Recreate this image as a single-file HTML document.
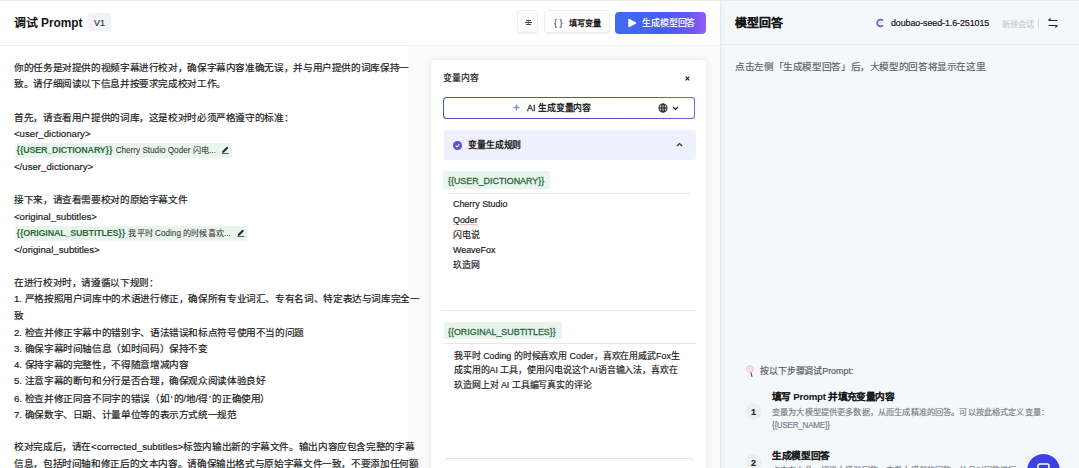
<!DOCTYPE html>
<html lang="zh-CN"><head><meta charset="utf-8">
<style>
*{box-sizing:border-box;margin:0;padding:0}
html,body{width:1079px;height:468px;overflow:hidden;background:#fff;font-family:"Liberation Sans",sans-serif;color:#1f2329}
.a{position:absolute}
.t{position:absolute;transform:scale(.7408);transform-origin:0 0;white-space:nowrap;-webkit-text-stroke-width:.25px}
#top{position:absolute;left:0;top:0;width:1079px;height:1px;background:#ebebeb}
#left{position:absolute;left:0;top:0;width:720px;height:468px;background:#fff}
#lhead{position:absolute;left:0;top:0;width:720px;height:46px;border-bottom:1px solid #eceef1}
.btn{position:absolute;top:10px;height:23px;border:1px solid #eceef1;border-radius:4px;background:#fff;box-shadow:0 1px 1px rgba(0,0,0,.06)}
#prompt{left:14px;top:60.4px;width:552px;font-size:13px;line-height:22.28px;color:#1a1d22;white-space:normal;font-weight:500}
#prompt p{white-space:pre-wrap;word-break:normal;line-break:normal}
.var{display:inline-block;background:#e9f5ec;border-radius:4px;padding:0 3px 0 1.5px;margin-left:2px;line-height:20px;vertical-align:top;margin-top:1px}
.var b{color:#2a6a3e;font-weight:700;font-size:12px;letter-spacing:-.2px;margin-right:1px;-webkit-text-stroke:0}
.var span{font-size:11px;color:#3a3a3a;-webkit-text-stroke-width:.1px}
#card{position:absolute;left:430.5px;top:59.5px;width:275.5px;height:420px;background:#fff;border-radius:4px;box-shadow:0 0 7px rgba(0,0,0,.09)}
#right{position:absolute;left:720px;top:0;width:359px;height:468px;background:#f5f8fb;border-left:1px solid #e5e8ec;box-shadow:inset 5px 0 5px -4px rgba(40,60,90,.05)}
#rhead{position:absolute;left:0;top:0;width:359px;height:45px;border-bottom:1px solid #e9ecf0}
</style></head><body>
<div id="left">
 <div id="lhead">
  <div class="t" style="left:14px;top:15.5px;font-size:16px;line-height:20px;font-weight:700;color:#151515;-webkit-text-stroke-width:0">调试 Prompt</div>
  <div class="a" style="left:88px;top:13px;width:23px;height:18px;background:#f0f2f5;border-radius:3px"></div>
  <div class="t" style="left:94px;top:15.5px;font-size:12px;line-height:18px;color:#333">V1</div>
  <div class="btn" style="left:517px;width:21px">
   <svg class="a" style="left:5.5px;top:7px" width="9" height="9" viewBox="0 0 9 9" fill="none" stroke="#444" stroke-width="1"><path d="M2 2.5h5M1 4.5h7M2 6.5h5"/><circle cx="4.5" cy="4.5" r="1" fill="#333" stroke="none"/></svg>
  </div>
  <div class="btn" style="left:544px;width:66px">
   <div class="t" style="left:9px;top:5.5px;font-size:12px;line-height:16px;color:#555">{ }</div>
   <div class="t" style="left:23.5px;top:5.5px;font-size:11px;line-height:16px;font-weight:700;color:#1a1a1a;-webkit-text-stroke-width:0">填写变量</div>
  </div>
  <div class="a" style="left:615px;width:91px;top:12px;height:21.6px;border-radius:4px;background:linear-gradient(90deg,#3f6bf1 0%,#4a5cf0 55%,#6f58f2 85%,#9a5cf5 100%)">
   <svg class="a" style="left:11.5px;top:6px" width="10" height="10" viewBox="0 0 10 10"><path d="M1.3 1.6Q1.3 0.2 2.6 0.9L8.8 4.2Q9.8 5 8.8 5.8L2.6 9.1Q1.3 9.8 1.3 8.4Z" fill="#fff"/></svg>
   <div class="t" style="left:27px;top:4.5px;font-size:12px;line-height:16px;color:#fff">生成模型回答</div>
  </div>
 </div>
 <div class="a" style="left:408px;top:46px;width:312px;height:422px;background:#fbfbfb"></div>
 <div class="t" id="prompt">
<p>你的任务是对提供的视频字幕进行校对，确保字幕内容准确无误，并与用户提供的词库保持一致。请仔细阅读以下信息并按要求完成校对工作。</p>
<p> </p>
<p>首先，请查看用户提供的词库，这是校对时必须严格遵守的标准：</p>
<p>&lt;user_dictionary&gt;</p>
<p><span class="var"><b>{{USER_DICTIONARY}}</b> <span>Cherry Studio Qoder 闪电...</span> <svg width="12" height="12" viewBox="0 0 9 9" style="margin-left:3.5px;vertical-align:-1px"><path d="M1.6 6.2L5.9 1.9Q6.4 1.4 6.9 1.9L7.4 2.4Q7.9 2.9 7.4 3.4L3.1 7.7H1.6Z" fill="#2a2a2a"/><path d="M1.2 8.4h6.8" stroke="#444" stroke-width=".9"/></svg></span></p>
<p>&lt;/user_dictionary&gt;</p>
<p> </p>
<p>接下来，请查看需要校对的原始字幕文件</p>
<p>&lt;original_subtitles&gt;</p>
<p><span class="var"><b>{{ORIGINAL_SUBTITLES}}</b> <span>我平时 Coding 的时候喜欢...</span> <svg width="12" height="12" viewBox="0 0 9 9" style="margin-left:3.5px;vertical-align:-1px"><path d="M1.6 6.2L5.9 1.9Q6.4 1.4 6.9 1.9L7.4 2.4Q7.9 2.9 7.4 3.4L3.1 7.7H1.6Z" fill="#2a2a2a"/><path d="M1.2 8.4h6.8" stroke="#444" stroke-width=".9"/></svg></span></p>
<p>&lt;/original_subtitles&gt;</p>
<p> </p>
<p>在进行校对时，请遵循以下规则：</p>
<p>1. 严格按照用户词库中的术语进行修正，确保所有专业词汇、专有名词、特定表达与词库完全一致</p>
<p>2. 检查并修正字幕中的错别字、语法错误和标点符号使用不当的问题</p>
<p>3. 确保字幕时间轴信息（如时间码）保持不变</p>
<p>4. 保持字幕的完整性，不得随意增减内容</p>
<p>5. 注意字幕的断句和分行是否合理，确保观众阅读体验良好</p>
<p>6. 检查并修正同音不同字的错误（如<span style="margin:0 1.5px 0 2px">'</span>的/地/得<span style="margin:0 2px 0 1.5px">'</span>的正确使用）</p>
<p>7. 确保数字、日期、计量单位等的表示方式统一规范</p>
<p> </p>
<p>校对完成后，请在&lt;corrected_subtitles&gt;标签内输出新的字幕文件。输出内容应包含完整的字幕信息，包括时间轴和修正后的文本内容。请确保输出格式与原始字幕文件一致，不要添加任何额外内容。</p>
 </div>
 <div id="card">
  <div class="t" style="left:12px;top:11px;font-size:12px;line-height:19px;color:#222">变量内容</div>
  <svg class="a" style="left:254.5px;top:16.5px" width="5" height="5" viewBox="0 0 5 5" stroke="#222" stroke-width="1.2"><path d="M.7 .7l3.6 3.6M4.3 .7l-3.6 3.6"/></svg>
  <div class="a" style="left:12px;top:37.5px;width:252px;height:21.5px;border-radius:3.5px;padding:1px;background:linear-gradient(90deg,#4a5bb8,#4e54b0 55%,#6a58c4 90%,#7d62d8)">
   <div style="width:100%;height:100%;background:#fff;border-radius:3px;position:relative">
    <svg class="a" style="left:68.5px;top:5px" width="9" height="9" viewBox="0 0 9 9" fill="#7a96e0"><path d="M4.5 0.5L5.4 3.6 8.5 4.5 5.4 5.4 4.5 8.5 3.6 5.4 0.5 4.5 3.6 3.6Z"/></svg>
    <div class="t" style="left:83px;top:3px;font-size:12px;line-height:19px;font-weight:500;color:#111;-webkit-text-stroke-width:.35px">AI 生成变量内容</div>
    <svg class="a" style="left:214px;top:5px" width="10" height="10" viewBox="0 0 10 10" fill="none" stroke="#222" stroke-width="1.1"><circle cx="5" cy="5" r="4"/><path d="M1 5h8M5 1v8"/><ellipse cx="5" cy="5" rx="1.8" ry="4"/></svg>
    <svg class="a" style="left:228.5px;top:7.5px" width="7" height="5" viewBox="0 0 7 5" fill="none" stroke="#222" stroke-width="1.2"><path d="M1 1l2.5 2.5L6 1"/></svg>
   </div>
  </div>
  <div class="a" style="left:13.5px;top:70.5px;width:251.5px;height:30px;background:#eef0fc;border-radius:3px">
   <svg class="a" style="left:8.5px;top:10.5px" width="9" height="9" viewBox="0 0 9 9"><circle cx="4.5" cy="4.5" r="4.5" fill="#5b4fd9"/><path d="M2.6 4.6l1.3 1.3 2.5-2.6" fill="none" stroke="#fff" stroke-width="1.1"/></svg>
   <div class="t" style="left:23.5px;top:8px;font-size:12px;line-height:19px;font-weight:700;color:#1a1a1a;-webkit-text-stroke-width:0">变量生成规则</div>
   <svg class="a" style="left:231.5px;top:11.5px" width="7" height="5" viewBox="0 0 7 5" fill="none" stroke="#333" stroke-width="1.2"><path d="M1 4l2.5-2.5L6 4"/></svg>
  </div>
  <div class="a" style="left:12px;top:111.5px;width:107.5px;height:18px;background:#e9f5ec;border-radius:2px"></div>
  <div class="t" style="left:17.5px;top:114px;font-size:12px;line-height:19px;color:#2b6b40;font-weight:400;-webkit-text-stroke-width:.4px">{{USER_DICTIONARY}}</div>
  <div class="a" style="left:17px;top:133px;width:242px;height:1px;background:#e8e8e8"></div>
  <div class="t" style="left:22px;top:137px;font-size:12px;line-height:20.5px;color:#222;white-space:pre">Cherry Studio
<span style="text-decoration:underline;text-decoration-color:#e49a9a;text-underline-offset:2px">Qoder</span>
闪电说
WeaveFox
玖造网</div>
  <div class="a" style="left:11px;top:250px;width:254px;height:1px;background:#e8e8e8"></div>
  <div class="a" style="left:13px;top:262px;width:118px;height:17px;background:#e9f5ec;border-radius:2px"></div>
  <div class="t" style="left:17.5px;top:265px;font-size:12px;line-height:19px;color:#2b6b40;font-weight:400;-webkit-text-stroke-width:.4px">{{ORIGINAL_SUBTITLES}}</div>
  <div class="a" style="left:13px;top:283px;width:252px;height:1px;background:#e8e8e8"></div>
  <div class="t" style="left:23px;top:289px;width:310px;font-size:12px;line-height:19.85px;color:#222;white-space:normal">我平时 Coding 的时候喜欢用 Coder，喜欢在用威武Fox生成实用的AI 工具，使用闪电说这个AI语音输入法，喜欢在玖造网上对 AI 工具编写真实的评论</div>
  <div class="a" style="left:14px;top:398px;width:248px;height:3px;border:1px solid #e6e6e6;border-bottom:none;border-radius:3px 3px 0 0"></div>
 </div>
</div>
<div id="right">
 <div id="rhead">
  <div class="t" style="left:14px;top:15.5px;font-size:16px;line-height:20px;font-weight:700;color:#151515">模型回答</div>
  <svg class="a" style="left:155px;top:18px" width="9" height="10" viewBox="0 0 9 10"><path d="M7 2.6A3.4 3.4 0 1 0 7 7.4" fill="none" stroke="#7460cf" stroke-width="1.8"/><circle cx="4.6" cy="5" r="1.6" fill="#e4e0f6"/></svg>
  <div class="t" style="left:170px;top:15.5px;font-size:12px;line-height:18px;color:#141414;letter-spacing:-.1px">doubao-seed-1.6-251015</div>
  <div class="t" style="left:280.5px;top:17px;font-size:11px;line-height:18px;color:#cbced4">新建会话</div><div class="a" style="left:316.5px;top:18.5px;width:1px;height:9px;background:#d5d8dd"></div>
  <svg class="a" style="left:325.5px;top:17px" width="12" height="11" viewBox="0 0 12 11" fill="none" stroke="#2a2a2a" stroke-width="1.1"><path d="M1.5 3.5h9M1.5 3.5l2.2-2M1.5 8.5h9M10.5 8.5l-2.2 2"/></svg>
 </div>
 <div class="t" style="left:14px;top:60.2px;font-size:13px;line-height:20px;color:#5f636b">点击左侧「生成模型回答」后，大模型的回答将显示在这里</div>
 <svg class="a" style="left:24px;top:365px" width="12" height="13" viewBox="0 0 12 13"><circle cx="5" cy="4" r="3.3" fill="#fbe3e6" stroke="#f2bcc4" stroke-width=".9"/><path d="M6 7.3L7 12" stroke="#555" stroke-width="1.1"/></svg>
 <div class="t" style="left:38.5px;top:364px;font-size:12px;line-height:18px;color:#555a62">按以下步骤调试Prompt:</div>
 <div class="a" style="left:24px;top:403px;width:17px;height:17px;border-radius:50%;background:#eceef2"></div>
 <div class="t" style="left:30px;top:405px;font-size:12px;line-height:18px;font-weight:700;color:#222">1</div>
 <div class="t" style="left:51px;top:390px;font-size:13px;line-height:19px;font-weight:700;color:#1a1a1a;letter-spacing:-.3px;-webkit-text-stroke-width:.1px">填写 Prompt 并填充变量内容</div>
 <div class="t" style="left:51px;top:405px;font-size:11px;line-height:18px;color:#7b8088">变量为大模型提供更多数据，从而生成精准的回答。可以按此格式定义变量：<br><span style="letter-spacing:-.4px">{{USER_NAME}}</span></div>
 <div class="a" style="left:24px;top:454px;width:17px;height:17px;border-radius:50%;background:#eceef2"></div>
 <div class="t" style="left:30px;top:456px;font-size:12px;line-height:18px;font-weight:700;color:#222">2</div>
 <div class="t" style="left:51px;top:449px;font-size:13px;line-height:19px;font-weight:700;color:#1a1a1a;-webkit-text-stroke-width:.1px">生成模型回答</div>
 <div class="t" style="left:51px;top:463px;font-size:11px;line-height:18px;color:#7b8088">点击右上角，切换大模型回答，查看大模型的回答，并且对回答进行</div>
 <div class="a" style="left:305.5px;top:453.8px;width:33.4px;height:33.4px;border-radius:50%;background:#3c42e2;box-shadow:0 0 0 1.5px rgba(255,255,255,.9),0 0 4px rgba(60,66,226,.25)">
  <svg class="a" style="left:10px;top:9px" width="13" height="13" viewBox="0 0 13 13" fill="none" stroke="#fff" stroke-width="1.5"><rect x="1" y="1" width="11" height="10" rx="2"/></svg>
 </div>
</div>
<div id="top"></div>
</body></html>
